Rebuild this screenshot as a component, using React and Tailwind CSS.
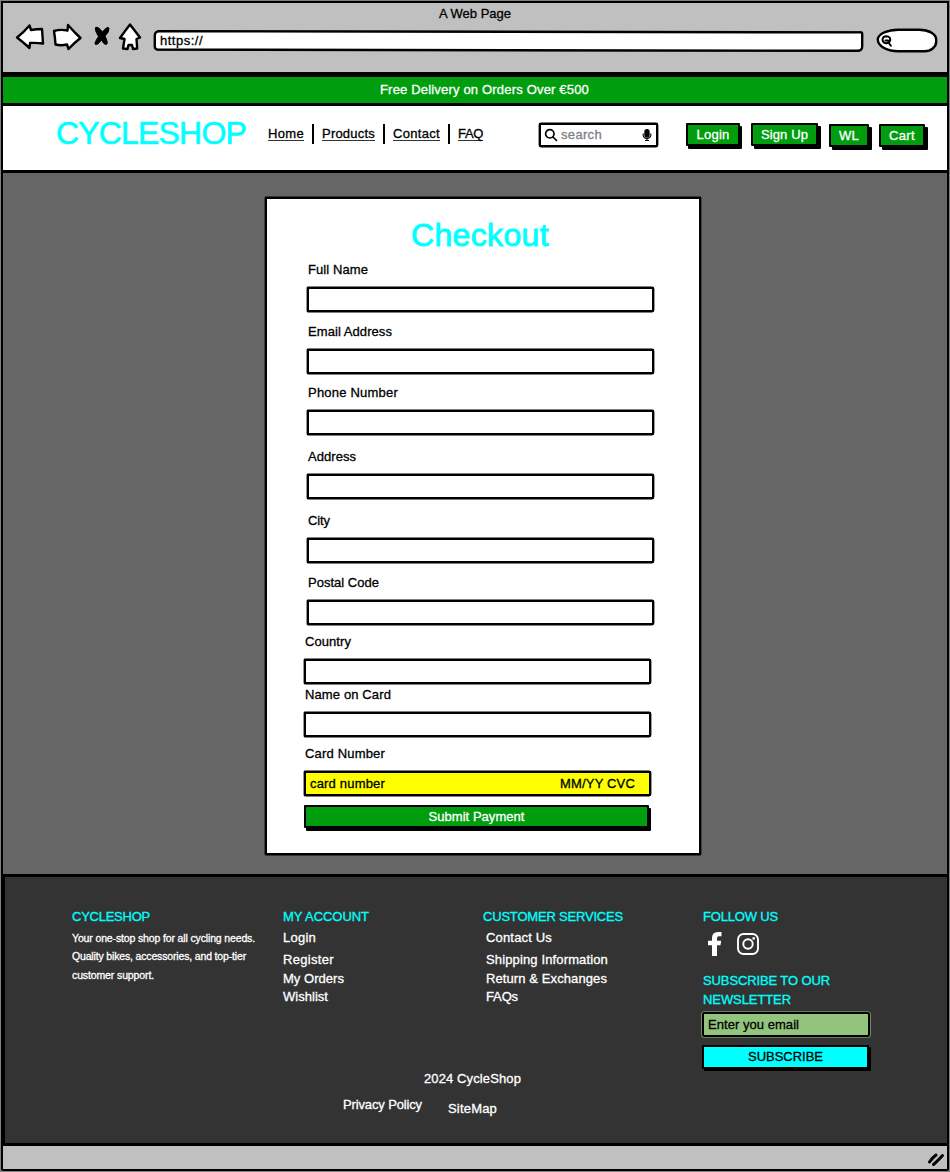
import { useLayoutEffect, useRef } from "react";

// A line of text whose tracking is adjusted so that it fills its box.
function T({ className = "", as: Tag = "div", children }) {
  const box = useRef(null);
  const run = useRef(null);
  useLayoutEffect(() => {
    const el = run.current;
    el.style.letterSpacing = "0px";
    const natural = el.getBoundingClientRect().width;
    const wanted = box.current.clientWidth;
    el.style.letterSpacing = `${(wanted - natural) / el.textContent.length}px`;
  }, [children]);
  return (
    <Tag ref={box} className={`block shrink-0 whitespace-nowrap ${className}`}>
      <span ref={run}>{children}</span>
    </Tag>
  );
}

const ink = { fill: "#fff", stroke: "#000", strokeWidth: 2.4, strokeLinejoin: "round", strokeLinecap: "round" };

function Chrome() {
  return (
    <header className="h-[69px] bg-[#c0c0c0] pt-[2px]">
      <T className="ml-[436px] w-[72px]">A Web Page</T>
      <div className="flex items-start pl-[12px]">
        <svg className="h-[28px] w-[30px]" viewBox="15 23 30 28" {...ink}>
          <path d="M17 37.5Q24 32 29.5 25.5L31 30Q37 29 42 29L43 43.5Q36 42.500 30 43L29.500 48Q23 42 17 37.500Z" />
        </svg>
        <svg className="ml-[7px] h-[28px] w-[31px]" viewBox="52 23 31 28" {...ink}>
          <path d="M54 31Q60 29 67.500 30.500L68 25Q75 33 80.500 38Q74 43 68.500 49L67 44.500Q61 46 55.500 44.500Q55 37 54 31Z" />
        </svg>
        <svg className="ml-[10px] h-[28px] w-[18px]" viewBox="93 23 18 28" stroke="#000" strokeWidth="1" strokeLinejoin="round">
          <path d="M95.500 27.500Q98 26 102.500 32Q107 26 109 28Q109.500 32 105 36Q108.500 43 106.500 44.500Q104 45 101.500 40Q97 46 95 44Q94.500 42.500 98.500 36.500Q94.500 30 95.500 27.500Z" />
        </svg>
        <svg className="ml-[7px] h-[28px] w-[24px]" viewBox="118 23 24 28" {...ink}>
          <path d="M130 24.500Q135 31 140 37.500L136.500 39L137.200 48.500L133 49L132 45L128.500 45L127.500 49L123 48.500L124.500 39L120 38Q125 31 130 24.500Z" />
        </svg>
        <div className="relative mt-[7px] ml-[12px] flex h-[22px] w-[709px] items-center pl-[6px]">
          <div className="absolute inset-x-0 inset-y-[1px] rotate-[0.1deg] rounded-[5px_2px_5px_4px] border-2 border-black bg-white shadow-[0_0_0_0.4px_#000]" />
          <T className="relative w-[43px]">https://</T>
        </div>
        <div className="mt-[6px] ml-[14px] flex h-[23px] w-[60px] items-center rounded-[24px_20px_14px_24px/12px_12px_12px_14px] border-2 border-black bg-white pl-[2px] shadow-[0_0_0_0.4px_#000]">
          <svg className="h-[12px] w-[12px]" viewBox="0 0 12 12" fill="none" stroke="#000" strokeWidth="2" strokeLinecap="round">
            <path d="M1.500 5Q1.500 1.200 5.500 1.200Q9.500 1.500 9.200 5.200Q8 8.500 5 8.300Q2 7.800 1.500 5ZM7.500 7.500L9.800 10.800M4.500 5.500H7" />
          </svg>
        </div>
      </div>
    </header>
  );
}

function NavLink({ className, children }) {
  return (
    <div className="h-[16px] border-b border-[#333]">
      <T as="a" className={className}>{children}</T>
    </div>
  );
}

const Bar = () => <div className="h-[20px] w-[2px] bg-black" />;

function InkButton({ className, children }) {
  return (
    <button className={`flex shrink-0 items-center justify-center rounded-[1px] border-2 border-black text-white ${className}`}>
      {children}
    </button>
  );
}

function ShopHeader() {
  return (
    <div className="flex h-[67px] items-start border-b-[3px] border-black bg-white">
      <T className="mt-[8px] ml-[53px] w-[190px] text-[32px] leading-[38px] text-[#00ffff] [-webkit-text-stroke:0.6px_#00ffff]">CYCLESHOP</T>
      <nav className="mt-[18px] ml-[22px] flex gap-[8px]">
        <div className="mt-[1px]"><NavLink className="w-[36px]">Home</NavLink></div>
        <Bar />
        <div className="mt-[1px]"><NavLink className="w-[53px]">Products</NavLink></div>
        <Bar />
        <div className="mt-[1px]"><NavLink className="w-[47px]">Contact</NavLink></div>
        <Bar />
        <div className="mt-[1px]"><NavLink className="w-[25px]">FAQ</NavLink></div>
      </nav>
      <div className="mt-[17px] ml-[56px] flex h-[24px] w-[119px] items-center rounded-[2px] border-2 border-black bg-white pl-[3px] shadow-[0_0_0_0.4px_#000]">
        <svg className="h-[14px] w-[14px]" viewBox="0 0 14 14" fill="none" stroke="#000" strokeWidth="1.700" strokeLinecap="round">
          <circle cx="5.800" cy="5.800" r="4.200" />
          <path d="M9 9L12.500 12.500" />
        </svg>
        <T className="ml-[3px] w-[41px] text-[#808088]">search</T>
        <svg className="ml-[40px] h-[14px] w-[10px]" viewBox="0 0 10 14" fill="none" stroke="#000" strokeWidth="1.100">
          <rect x="2.900" y="1.500" width="4.200" height="7.500" rx="2.100" fill="#000" />
          <path d="M1.200 5.500V7.500Q1.700 10.400 5 10.400Q8.300 10.400 8.800 7.500V5.500M5 10.400V12.500M3 12.500H7" />
        </svg>
      </div>
      <InkButton className="mt-[17px] ml-[28px] h-[23px] w-[54px] bg-[#009e0f] shadow-[2px_3px_0_0_#000]"><T className="w-[33px]">Login</T></InkButton>
      <InkButton className="mt-[17px] ml-[11px] h-[23px] w-[67px] bg-[#009e0f] shadow-[3px_3px_0_0_#000]"><T className="w-[47px]">Sign Up</T></InkButton>
      <InkButton className="mt-[18px] ml-[11px] h-[23px] w-[40px] bg-[#009e0f] shadow-[3px_3px_0_0_#000]"><T className="w-[20px]">WL</T></InkButton>
      <InkButton className="mt-[18px] ml-[10px] h-[23px] w-[46px] bg-[#009e0f] shadow-[3px_3px_0_0_#000]"><T className="w-[26px]">Cart</T></InkButton>
    </div>
  );
}

function Field({ label, labelWidth, className = "", tint = "bg-white", children }) {
  return (
    <div className={className}>
      <T as="label" className={`ml-[1px] ${labelWidth}`}>{label}</T>
      <div className={`mt-[8px] flex h-[25px] w-[347px] items-center justify-between rounded-[1px_2px_2px_1px] border-2 border-black shadow-[0_0_0_0.4px_#000] ${tint}`}>
        {children}
      </div>
    </div>
  );
}

function Checkout() {
  return (
    <main className="flex h-[701px] items-start bg-[#666666] pt-[24px]">
      <form className="ml-[262px] h-[658px] w-[436px] rounded-[1px] border-2 border-black bg-white pt-[1px] pl-[40px] shadow-[0_0_0_0.4px_#000]" onSubmit={(e) => e.preventDefault()}>
        <T as="h1" className="mt-[16px] ml-[104px] w-[138px] text-[32px] leading-[38px] text-[#00ffff] [-webkit-text-stroke:0.9px_#00ffff]">Checkout</T>
        <Field className="mt-[7px]" label="Full Name" labelWidth="w-[60px]" />
        <Field className="mt-[11px]" label="Email Address" labelWidth="w-[84px]" />
        <Field className="mt-[10px]" label="Phone Number" labelWidth="w-[90px]" />
        <Field className="mt-[13px]" label="Address" labelWidth="w-[48px]" />
        <Field className="mt-[13px]" label="City" labelWidth="w-[22px]" />
        <Field className="mt-[11px]" label="Postal Code" labelWidth="w-[71px]" />
        <Field className="mt-[8px] -ml-[3px]" label="Country" labelWidth="w-[46px]" />
        <Field className="mt-[2px] -ml-[3px]" label="Name on Card" labelWidth="w-[86px]" />
        <Field className="mt-[8px] -ml-[3px]" label="Card Number" labelWidth="w-[80px]" tint="bg-[#ffff00]">
          <T className="ml-[4px] w-[75px]">card number</T>
          <T className="mr-[14px] w-[75px]">MM/YY CVC</T>
        </Field>
        <InkButton className="mt-[9px] -ml-[3px] h-[23px] w-[345px] bg-[#009e0f] shadow-[2px_3px_0_0_#000]"><T className="w-[96px]">Submit Payment</T></InkButton>
      </form>
    </main>
  );
}

const heading = "text-[#00ffff]";

function Footer() {
  return (
    <footer className="h-[272px] border-y-[3px] border-l-2 border-black bg-[#333333] text-white">
      <div className="flex h-[157px] items-start pt-[31px]">
        <section className="ml-[67px] w-[211px] text-[10.5px]">
          <T className={`w-[78px] text-[13px] ${heading}`}>CYCLESHOP</T>
          <T className="mt-[3px] w-[183px]">Your one-stop shop for all cycling needs.</T>
          <T className="w-[174px]">Quality bikes, accessories, and top-tier</T>
          <T className="mt-[1px] w-[82px]">customer support.</T>
        </section>
        <section className="w-[200px]">
          <T className={`w-[86px] ${heading}`}>MY ACCOUNT</T>
          <T className="mt-[3px] w-[33px]">Login</T>
          <T className="mt-[4px] w-[51px]">Register</T>
          <T className="mt-[1px] w-[61px]">My Orders</T>
          <T className="w-[45px]">Wishlist</T>
        </section>
        <section className="w-[220px] pl-[3px]">
          <T className={`-ml-[3px] w-[140px] ${heading}`}>CUSTOMER SERVICES</T>
          <T className="mt-[3px] w-[66px]">Contact Us</T>
          <T className="mt-[4px] w-[122px]">Shipping Information</T>
          <T className="mt-[1px] w-[121px]">Return &amp; Exchanges</T>
          <T className="w-[32px]">FAQs</T>
        </section>
        <section>
          <T className={`w-[75px] ${heading}`}>FOLLOW US</T>
          <div className="mt-[6px] flex h-[24px] items-center">
            <svg className="ml-[5px] h-[24px] w-[14px]" viewBox="0 0 14 24" fill="#fff">
              <path d="M4 24V13.200H0V8.700H4V6Q4 0 10 0H13.500V4.200H11Q9 4.200 9 6.200V8.700H13.200L12.500 13.200H9V24Z" />
            </svg>
            <svg className="ml-[15px] h-[22px] w-[22px]" viewBox="0 0 22 22" fill="none" stroke="#fff" strokeWidth="1.900">
              <rect x="1" y="1" width="20" height="20" rx="5.500" />
              <circle cx="11" cy="11" r="4.700" />
              <circle cx="16.700" cy="5.400" r="1.300" fill="#fff" stroke="none" />
            </svg>
          </div>
          <T className={`mt-[16px] w-[127px] ${heading}`}>SUBSCRIBE TO OUR</T>
          <T className={`mt-[1px] w-[88px] ${heading}`}>NEWSLETTER</T>
          <div className="mt-[3px] -ml-[1px] flex h-[25px] w-[168px] items-center rounded-[2px] border-2 border-black bg-[#93c47d] text-black shadow-[0_0_0_0.6px_#93c47d]">
            <T className="ml-[4px] w-[91px]">Enter you email</T>
          </div>
          <InkButton className="mt-[8px] -ml-[1px] h-[24px] w-[167px] bg-[#00ffff] shadow-[2px_2px_0_0_#000]"><T className="w-[75px] text-black">SUBSCRIBE</T></InkButton>
        </section>
      </div>
      <T className="mt-[36px] ml-[419px] w-[97px]">2024 CycleShop</T>
      <div className="mt-[8px] flex">
        <T className="ml-[338px] w-[79px]">Privacy Policy</T>
        <T className="mt-[4px] ml-[26px] w-[49px]">SiteMap</T>
      </div>
    </footer>
  );
}

export default function App() {
  return (
    <div className="h-[1172px] w-[950px] bg-[#808080] px-[1px] pt-[1px] font-['Liberation_Sans',Arial,sans-serif] text-[13px] leading-[18px] text-black [-webkit-text-stroke:0.3px]">
      <div className="h-[1170px] w-[948px] rounded-b-[2px] border-2 border-black bg-black">
        <Chrome />
        <div className="mt-[5px] h-[26px] bg-[#009e0f] pt-[4px] text-white">
          <T className="ml-[377px] w-[209px]">Free Delivery on Orders Over €500</T>
        </div>
        <div className="mt-[3px]"><ShopHeader /></div>
        <Checkout />
        <Footer />
        <div className="flex h-[23px] justify-end bg-[#c0c0c0]">
          <svg className="mt-[6px] mr-[2px] h-[15px] w-[18px]" viewBox="0 0 18 15" fill="none" stroke="#000" strokeWidth="3" strokeLinecap="round">
            <path d="M2.500 10Q5 6 9 3M6.500 12.500Q10 9.500 15.500 3.500" />
          </svg>
        </div>
      </div>
    </div>
  );
}
